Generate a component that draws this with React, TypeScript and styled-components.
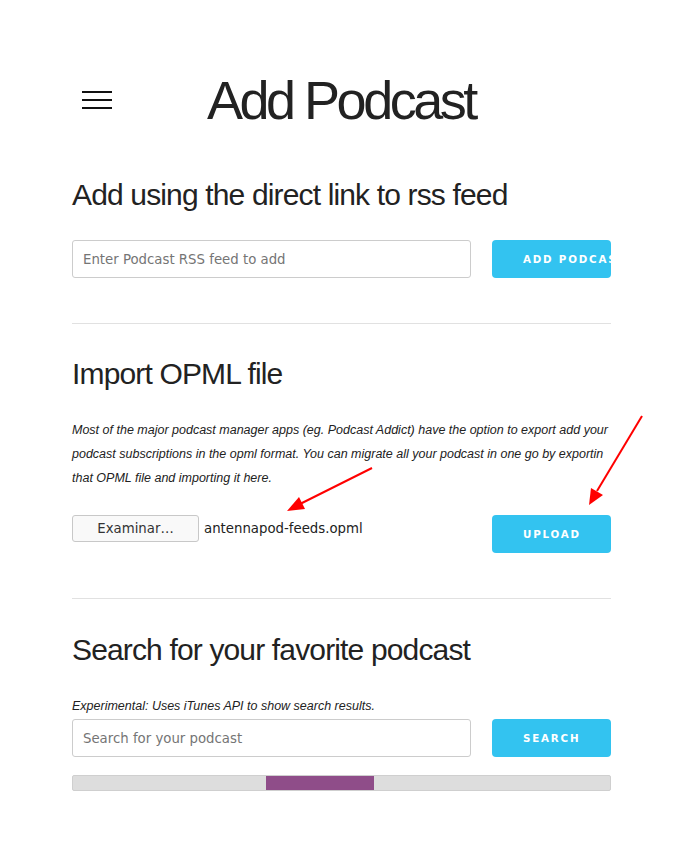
import React from "react";
import styled, { createGlobalStyle } from "styled-components";

const Global = createGlobalStyle`
  html, body { margin: 0; padding: 0; background: #fff; }
  body { font-family: "Liberation Sans", Arial, sans-serif; color: #222; }
  * { box-sizing: border-box; }
`;

const Page = styled.div`
  position: relative;
  width: 676px;
  min-height: 860px;
  padding: 50px 65px 0 72px;
`;

const Header = styled.header`
  display: flex;
  align-items: center;
  height: 100px;
`;

const Burger = styled.button`
  display: flex;
  flex-direction: column;
  gap: 6px;
  width: 30px;
  margin-left: 10px;
  padding: 0;
  border: 0;
  background: none;
  span {
    display: block;
    height: 2px;
    background: #111;
  }
`;

const Title = styled.h1`
  margin: 0 0 0 95px;
  font-family: "Liberation Sans", Arial, sans-serif;
  font-weight: 400;
  font-size: 54px;
  letter-spacing: -3.5px;
  color: #222;
`;

const SectionTitle = styled.h2`
  margin: 0;
  font-family: "Liberation Sans", Arial, sans-serif;
  font-weight: 400;
  font-size: 30px;
  letter-spacing: -0.85px;
  line-height: 36px;
  color: #222;
`;

const Section = styled.section<{ $top: number }>`
  padding-top: ${(p) => p.$top}px;
`;

const Row = styled.div<{ $top: number }>`
  display: flex;
  align-items: flex-start;
  justify-content: space-between;
  margin-top: ${(p) => p.$top}px;
`;

const TextInput = styled.input`
  width: 399px;
  height: 38px;
  padding: 0 10px;
  border: 1px solid #ccc;
  border-radius: 3px;
  font-family: "DejaVu Sans", sans-serif;
  font-size: 13.3px;
  color: #333;
  outline: none;
  &::placeholder { color: #757575; }
`;

const ActionButton = styled.button`
  width: 119px;
  height: 38px;
  padding: 0 31px;
  border: 0;
  border-radius: 4px;
  background: #33c3f0;
  color: #fff;
  font-family: "DejaVu Sans", sans-serif;
  font-weight: 700;
  font-size: 10.3px;
  letter-spacing: 1.8px;
  text-transform: uppercase;
  white-space: nowrap;
  overflow: hidden;
  text-align: center;
  cursor: pointer;
`;

const Divider = styled.hr<{ $top: number }>`
  margin: ${(p) => p.$top}px 0 0;
  border: 0;
  border-top: 1px solid #e1e1e1;
`;

const Note = styled.p<{ $top: number; $lh: number }>`
  margin: ${(p) => p.$top}px 0 0;
  font-family: "Liberation Sans", Arial, sans-serif;
  font-style: italic;
  font-size: 12.5px;
  line-height: ${(p) => p.$lh}px;
  color: #222;
  white-space: nowrap;
`;

const FilePick = styled.div`
  display: flex;
  align-items: center;
  gap: 5px;
  font-family: "DejaVu Sans", sans-serif;
  font-size: 13.3px;
  color: #222;
`;

const FileButton = styled.span`
  display: flex;
  align-items: center;
  justify-content: center;
  width: 127px;
  height: 27px;
  border: 1px solid #c8c8c8;
  border-radius: 3px;
  background: #f9f9f9;
  color: #333;
`;

const Progress = styled.div`
  position: relative;
  height: 16px;
  margin-top: 18px;
  border: 1px solid #cfcfcf;
  border-radius: 2px;
  background: #dddddd;
  overflow: hidden;
`;

const ProgressFill = styled.div`
  position: absolute;
  top: -1px;
  bottom: -1px;
  background: #8f4d89;
`;

const Annotations = styled.svg`
  position: absolute;
  left: 0;
  top: 0;
  pointer-events: none;
`;

export default function App() {
  return (
    <>
      <Global />
      <Page>
        <Header>
          <Burger aria-label="menu">
            <span />
            <span />
            <span />
          </Burger>
          <Title>Add Podcast</Title>
        </Header>

        <Section $top={27}>
          <SectionTitle>Add using the direct link to rss feed</SectionTitle>
          <Row $top={27}>
            <TextInput placeholder="Enter Podcast RSS feed to add" />
            <ActionButton>Add Podcast</ActionButton>
          </Row>
        </Section>

        <Divider $top={45} />

        <Section $top={32}>
          <SectionTitle>Import OPML file</SectionTitle>
          <Note $top={26} $lh={24}>
            Most of the major podcast manager apps (eg. Podcast Addict) have the option to export add your
            <br />
            podcast subscriptions in the opml format. You can migrate all your podcast in one go by exportin
            <br />
            that OPML file and importing it here.
          </Note>
          <Row $top={25}>
            <FilePick>
              <FileButton>Examinar…</FileButton>
              <span>antennapod-feeds.opml</span>
            </FilePick>
            <ActionButton>Upload</ActionButton>
          </Row>
        </Section>

        <Divider $top={45} />

        <Section $top={33}>
          <SectionTitle>Search for your favorite podcast</SectionTitle>
          <Note $top={30} $lh={16}>
            Experimental: Uses iTunes API to show search results.
          </Note>
          <Row $top={5}>
            <TextInput placeholder="Search for your podcast" />
            <ActionButton>Search</ActionButton>
          </Row>
          <Progress>
            <ProgressFill style={{ left: "36%", width: "20%" }} />
          </Progress>
        </Section>

        <Annotations width="676" height="860" viewBox="0 0 676 860">
          <g stroke="#f00" strokeWidth="2" fill="#f00">
            <line x1="372" y1="468" x2="300" y2="504" />
            <polygon points="287,511 299,497 305,509" stroke="none" />
            <line x1="642" y1="416" x2="597" y2="491" />
            <polygon points="589,505 591,488 603,495" stroke="none" />
          </g>
        </Annotations>
      </Page>
    </>
  );
}
